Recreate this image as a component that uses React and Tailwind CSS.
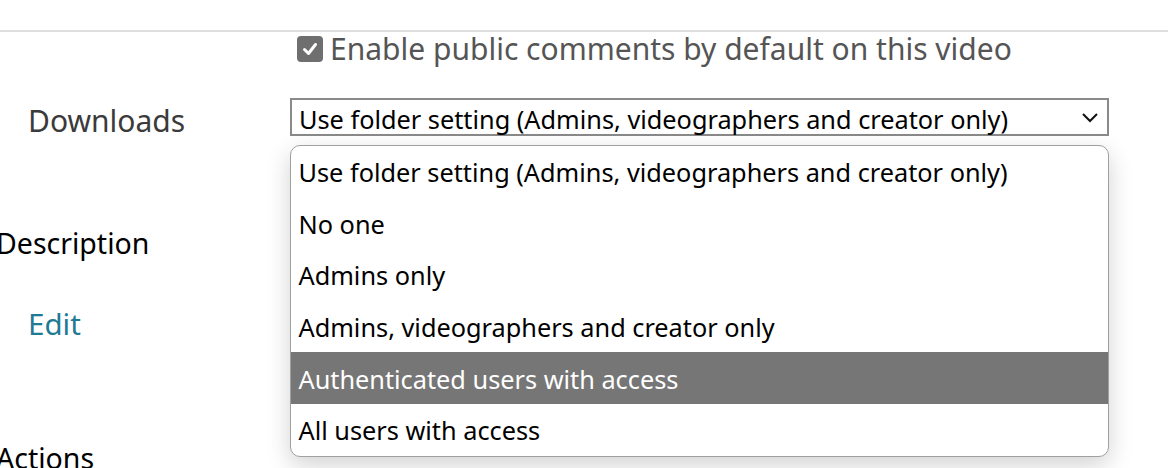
import React from "react";

const options = [
  "Use folder setting (Admins, videographers and creator only)",
  "No one",
  "Admins only",
  "Admins, videographers and creator only",
  "Authenticated users with access",
  "All users with access",
];

export default function App() {
  return (
    <div
      className="relative w-[1168px] h-[468px] overflow-hidden bg-white text-[25.3px] leading-none"
      style={{ fontFamily: '"Noto Sans", "Open Sans", sans-serif' }}
    >
      <div className="h-[32px] border-b-2 border-[#dedede]" />
      <div className="flex items-center gap-[7px] pl-[297px] h-[34px]">
        <div className="w-[26px] h-[26px] rounded-[4px] bg-[#6f6f6f] flex items-center justify-center shrink-0">
          <svg width="18" height="18" viewBox="0 0 18 18">
            <path d="M3.5 9.5 L7.5 13.5 L14.5 4.5" fill="none" stroke="white" strokeWidth="3" strokeLinecap="round" strokeLinejoin="round" />
          </svg>
        </div>
        <span className="text-[#555555] text-[30px]">Enable public comments by default on this video</span>
      </div>
      <div className="flex items-start mt-[32px]">
        <div className="w-[290px] pl-[28px] pt-[8px] text-[#3b3b3b] text-[30px]">Downloads</div>
        <div className="relative w-[819px]">
          <div className="h-[38px] border-2 border-[#8a8a8a] flex items-center justify-between pl-[7px] pr-[8px] text-black">
            <span className="pt-[6px]">Use folder setting (Admins, videographers and creator only)</span>
            <svg width="18" height="12" viewBox="0 0 18 12">
              <path d="M2 3 L9 10 L16 3" fill="none" stroke="#111" strokeWidth="2" />
            </svg>
          </div>
          <div className="absolute left-0 top-[47px] w-[819px] z-10 bg-white rounded-[10px] border-[1.5px] border-[#a0a0a0] shadow-[0_8px_24px_rgba(0,0,0,0.18)] overflow-hidden">
            {options.map((o, i) => (
              <div
                key={o}
                className={`h-[51.6px] flex items-center pl-[7.5px] pt-[2px] ${i === 4 ? "bg-[#767676] text-white" : "text-black"}`}
              >
                {o}
              </div>
            ))}
          </div>
        </div>
      </div>
      <div className="ml-[-4px] mt-[92px] text-[28.5px] leading-[30px] text-black">Description</div>
      <div className="pl-[28px] mt-[51px] text-[29.5px] leading-[30px] text-[#1f7a96]">Edit</div>
      <div className="ml-[-4px] mt-[104px] text-[28.5px] leading-[30px] text-black">Actions</div>
    </div>
  );
}
